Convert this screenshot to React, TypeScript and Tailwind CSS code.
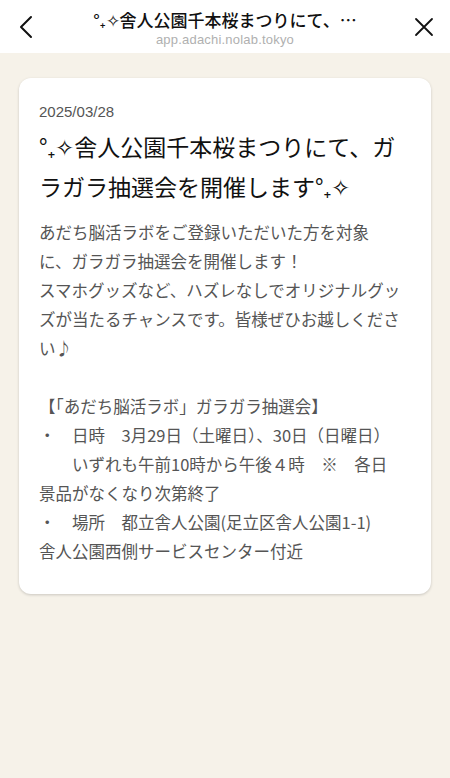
import React from 'react';

const FONT = '"Noto Sans CJK JP", "Noto Sans", sans-serif';

const bodyLines: string[] = [
  'あだち脳活ラボをご登録いただいた方を対象',
  'に、ガラガラ抽選会を開催します！',
  'スマホグッズなど、ハズレなしでオリジナルグッ',
  'ズが当たるチャンスです。皆様ぜひお越しくださ',
  'い♪',
  '',
  '【「あだち脳活ラボ」ガラガラ抽選会】',
  '・　日時　3月29日（土曜日）、30日（日曜日）',
  '　　いずれも午前10時から午後４時　※　各日',
  '景品がなくなり次第終了',
  '・　場所　都立舎人公園(足立区舎人公園1-1)',
  '舎人公園西側サービスセンター付近',
];

export default function App() {
  return (
    <div className="w-[450px] h-[778px] bg-[#f6f2e9] flex flex-col" style={{ fontFamily: FONT }}>
      {/* Browser header */}
      <div className="h-[53px] bg-white flex items-center justify-between px-[16px] shrink-0">
        <button className="w-[20px] h-[24px] flex items-center justify-center">
          <svg width="16" height="24" viewBox="0 0 16 24" fill="none">
            <path d="M13 2 L3 12 L13 22" stroke="#111" strokeWidth="2" strokeLinecap="round" strokeLinejoin="round" />
          </svg>
        </button>
        <div className="flex flex-col items-center pt-[5px]">
          <div className="text-[17px] leading-[22px] font-medium text-[#111] whitespace-nowrap">°₊✧舎人公園千本桜まつりにて、…</div>
          <div className="text-[13px] leading-[18px] text-[#b0b0b0] tracking-[0.2px]" style={{ fontFamily: '"Liberation Sans", sans-serif' }}>
            app.adachi.nolab.tokyo
          </div>
        </div>
        <button className="w-[20px] h-[24px] flex items-center justify-center">
          <svg width="20" height="20" viewBox="0 0 20 20" fill="none">
            <path d="M2 2 L18 18 M18 2 L2 18" stroke="#111" strokeWidth="1.8" strokeLinecap="round" />
          </svg>
        </button>
      </div>

      {/* Content */}
      <div className="px-[19px] pt-[25px]">
        <div className="bg-white rounded-[12px] shadow-[0_1px_3px_rgba(0,0,0,0.18)] px-[20px] pt-[24px] pb-[28px]">
          <div className="text-[15px] leading-[20px] text-[#555]" style={{ fontFamily: '"Liberation Sans", sans-serif' }}>
            2025/03/28
          </div>
          <h1 className="mt-[4px] text-[23px] leading-[40px] text-[#111] font-normal">
            <span className="block whitespace-nowrap">°₊✧舎人公園千本桜まつりにて、ガ</span>
            <span className="block whitespace-nowrap">ラガラ抽選会を開催します°₊✧</span>
          </h1>
          <div className="mt-[12px] text-[16.5px] leading-[29px] text-[#555]">
            {bodyLines.map((line, i) => (
              <div key={i} className="whitespace-nowrap h-[29px]">
                {line}
              </div>
            ))}
          </div>
        </div>
      </div>
    </div>
  );
}
